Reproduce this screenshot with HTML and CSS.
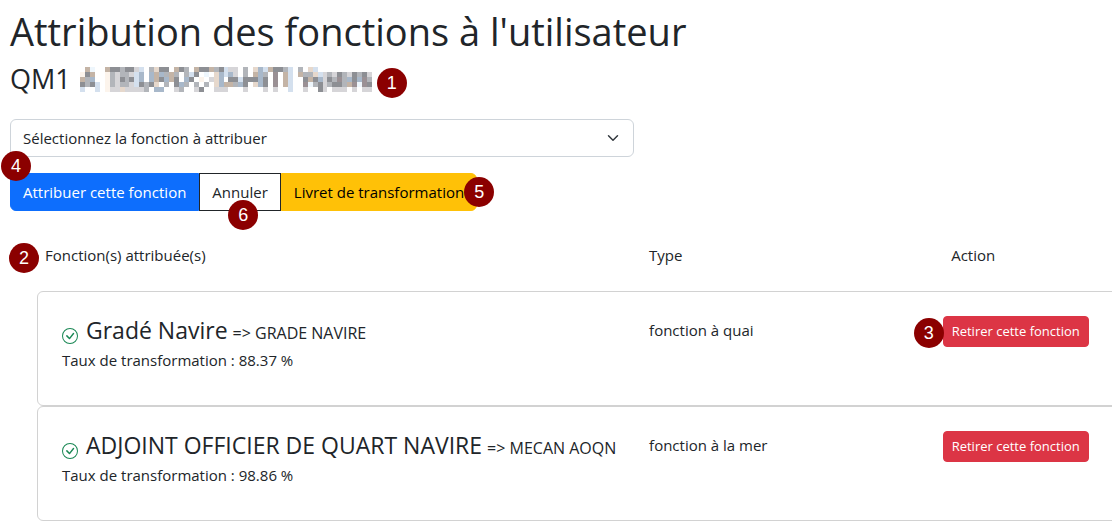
FILE: index.html
```html
<!DOCTYPE html>
<html lang="fr">
<head>
<meta charset="utf-8">
<title>Attribution des fonctions</title>
<link rel="stylesheet" href="styles.css">
<script src="mosaic.js" defer></script>
</head>
<body>
<main class="page">
  <h1 class="title">Attribution des fonctions à l'utilisateur</h1>
  <h2 class="user"><span>QM1</span>
    <svg class="mosaic" id="mosaic" viewBox="0 0 59 5" preserveAspectRatio="none" shape-rendering="crispEdges" aria-hidden="true"></svg>
    <span class="marker marker-1">1</span></h2>
  <form class="form">
    <select class="select" aria-label="Fonction à attribuer"><option>Sélectionnez la fonction à attribuer</option></select>
    <div class="buttons">
      <button type="button" class="btn btn-primary">Attribuer cette fonction<span class="marker marker-4">4</span></button>
      <button type="button" class="btn btn-outline">Annuler<span class="marker marker-6">6</span></button>
      <button type="button" class="btn btn-warning">Livret de transformation<span class="marker marker-5">5</span></button>
    </div>
  </form>
  <section class="list">
    <div class="row head">
      <div class="head-name"><span class="marker marker-2">2</span>Fonction(s) attribuée(s)</div><div>Type</div><div>Action</div>
    </div>
    <article class="row card">
      <div>
        <div class="name"><svg class="check" viewBox="0 0 16 16" fill="#198754" aria-hidden="true"><path d="M8 15A7 7 0 1 1 8 1a7 7 0 0 1 0 14m0 1A8 8 0 1 0 8 0a8 8 0 0 0 0 16"/><path d="m10.97 4.97-.02.022-3.473 4.425-2.093-2.094a.75.75 0 0 0-1.06 1.06L6.97 11.03a.75.75 0 0 0 1.079-.02l3.992-4.99a.75.75 0 0 0-1.071-1.05"/></svg><span class="label">Gradé Navire</span> <span class="code">=&gt; GRADE NAVIRE</span></div>
        <div>Taux de transformation : 88.37 %</div>
      </div>
      <div class="type">fonction à quai</div>
      <div><button type="button" class="btn-danger">Retirer cette fonction<span class="marker marker-3">3</span></button></div>
    </article>
    <article class="row card">
      <div>
        <div class="name"><svg class="check" viewBox="0 0 16 16" fill="#198754" aria-hidden="true"><path d="M8 15A7 7 0 1 1 8 1a7 7 0 0 1 0 14m0 1A8 8 0 1 0 8 0a8 8 0 0 0 0 16"/><path d="m10.97 4.97-.02.022-3.473 4.425-2.093-2.094a.75.75 0 0 0-1.06 1.06L6.97 11.03a.75.75 0 0 0 1.079-.02l3.992-4.99a.75.75 0 0 0-1.071-1.05"/></svg><span class="label">ADJOINT OFFICIER DE QUART NAVIRE</span> <span class="code">=&gt; MECAN AOQN</span></div>
        <div>Taux de transformation : 98.86 %</div>
      </div>
      <div class="type">fonction à la mer</div>
      <div><button type="button" class="btn-danger">Retirer cette fonction</button></div>
    </article>
  </section>
</main>
</body>
</html>
```

FILE: mosaic.js
```js
// Pixelated block that hides the user's name: one letter per cell.
const colours = {
  a: '#8d8f94', b: '#b2b5ba', c: '#d6d5d8', d: '#9a9094', t: '#c4b4a6',
  l: '#e6d8cc', u: '#a8b8ca', v: '#d4e0ee', p: '#eef6fc', w: '#fcf4ec'
};
const rows = [
  '.tp..taabaacv.blaa.tab.taatbavcc.b.luvtaabv.b.lv...........',
  'wat..wbcbbcvu.utubtb.bva.p.luvuc.b.tub.d.tv.tbblvcbcabcabac',
  'tbu..wbcabavu.utauta.ua.w.clu.aavaaaua.d.tv..ataucabdbuaudb',
  'abav.wbcbbcvabal.b.aub.b.b.luttbua.lua.d.tv..dpbacbaabtdpda',
  'v..v.wcclccccb.uu..cb..ca..ccc...c...c.c..v..c..ac.ccc.c.cc'
];
const svg = document.getElementById('mosaic');
rows.forEach((row, y) => [...row].forEach((key, x) => {
  if (!colours[key]) return;
  const cell = document.createElementNS('http://www.w3.org/2000/svg', 'rect');
  cell.setAttribute('x', x);
  cell.setAttribute('y', y);
  cell.setAttribute('width', 1);
  cell.setAttribute('height', 1);
  cell.setAttribute('fill', colours[key]);
  svg.append(cell);
}));
```

FILE: styles.css
```css
* { box-sizing: border-box; }
body {
  margin: 0;
  overflow-x: hidden;
  background: #fff;
  color: #212529;
  font: 15px/24px "Open Sans", "Noto Sans", sans-serif;
}
.page { padding: 7px 0 9px 10px; }
.title { margin: 0 0 8px; font-size: 38px; line-height: 48px; font-weight: 400; }
.user { display: flex; align-items: flex-start; margin: 0 0 21px; font-size: 27px; line-height: 32px; font-weight: 400; }
.mosaic { width: 292px; height: 25px; margin: 4px 5px 0 9px; }
.marker {
  display: flex; align-items: center; justify-content: center; flex: none;
  width: 30px; height: 30px; border-radius: 50%;
  background: #8b0000; color: #fff;
  font: 18px/30px "Liberation Sans", Arial, sans-serif;
}
.marker-1 { margin-top: 5px; }
.select {
  display: block; width: calc(57% - 4px); height: 38px; padding: 0 12px;
  appearance: none; border: 1px solid #ced4da; border-radius: 6px; color: inherit; font: inherit;
  background: #fff url("data:image/svg+xml,%3Csvg xmlns='http://www.w3.org/2000/svg' viewBox='0 0 16 16'%3E%3Cpath fill='none' stroke='%23343a40' stroke-linecap='round' stroke-linejoin='round' stroke-width='2' d='m2 5 6 6 6-6'/%3E%3C/svg%3E") no-repeat right 14px center / 12px 12px;
}
.buttons { display: flex; margin-top: 16px; }
.btn { position: relative; height: 38px; padding: 0 12px; border: 1px solid; font: inherit; white-space: nowrap; }
.btn-primary { background: #0d6efd; border-color: #0d6efd; color: #fff; border-radius: 6px 0 0 6px; }
.btn-outline { background: #fff; border-color: #212529; color: #212529; }
.btn-warning { background: #ffc107; border-color: #ffc107; color: #000; border-radius: 0 6px 6px 0; }
.btn .marker, .marker-3, .marker-2 { position: absolute; }
.marker-4 { left: -10px; top: -23px; }
.marker-6 { left: 28px; top: 26px; }
.marker-5 { right: -18px; top: 3px; }
.marker-3 { left: -30px; top: 1px; }
.marker-2 { left: -36px; top: 0; }
/* The list is wider than the page and runs off its right edge. */
.list { width: calc(110% + 12px); margin: 32px 0 0 27px; }
.row { display: grid; grid-template-columns: minmax(0, 2fr) minmax(0, 1fr) minmax(0, 1fr); }
.head { padding: 0 8px 24px; }
.head-name { position: relative; }
.card { min-height: 115px; padding: 24px; border: 1px solid #d2d2d2; border-radius: 6px; }
.name { display: flex; align-items: baseline; line-height: 29px; white-space: nowrap; }
.check { width: 16px; height: 16px; margin: 0 8px 4px 0; align-self: flex-end; }
.label { font-size: 23px; margin-right: 5px; }
.code { font-size: 16px; }
.type { padding-top: 2px; }
.btn-danger { position: relative; height: 31px; padding: 0 8px; border: 1px solid #dc3545; border-radius: 4px; background: #dc3545; color: #fff; font: 13px/21px "Open Sans", "Noto Sans", sans-serif; white-space: nowrap; }
```
